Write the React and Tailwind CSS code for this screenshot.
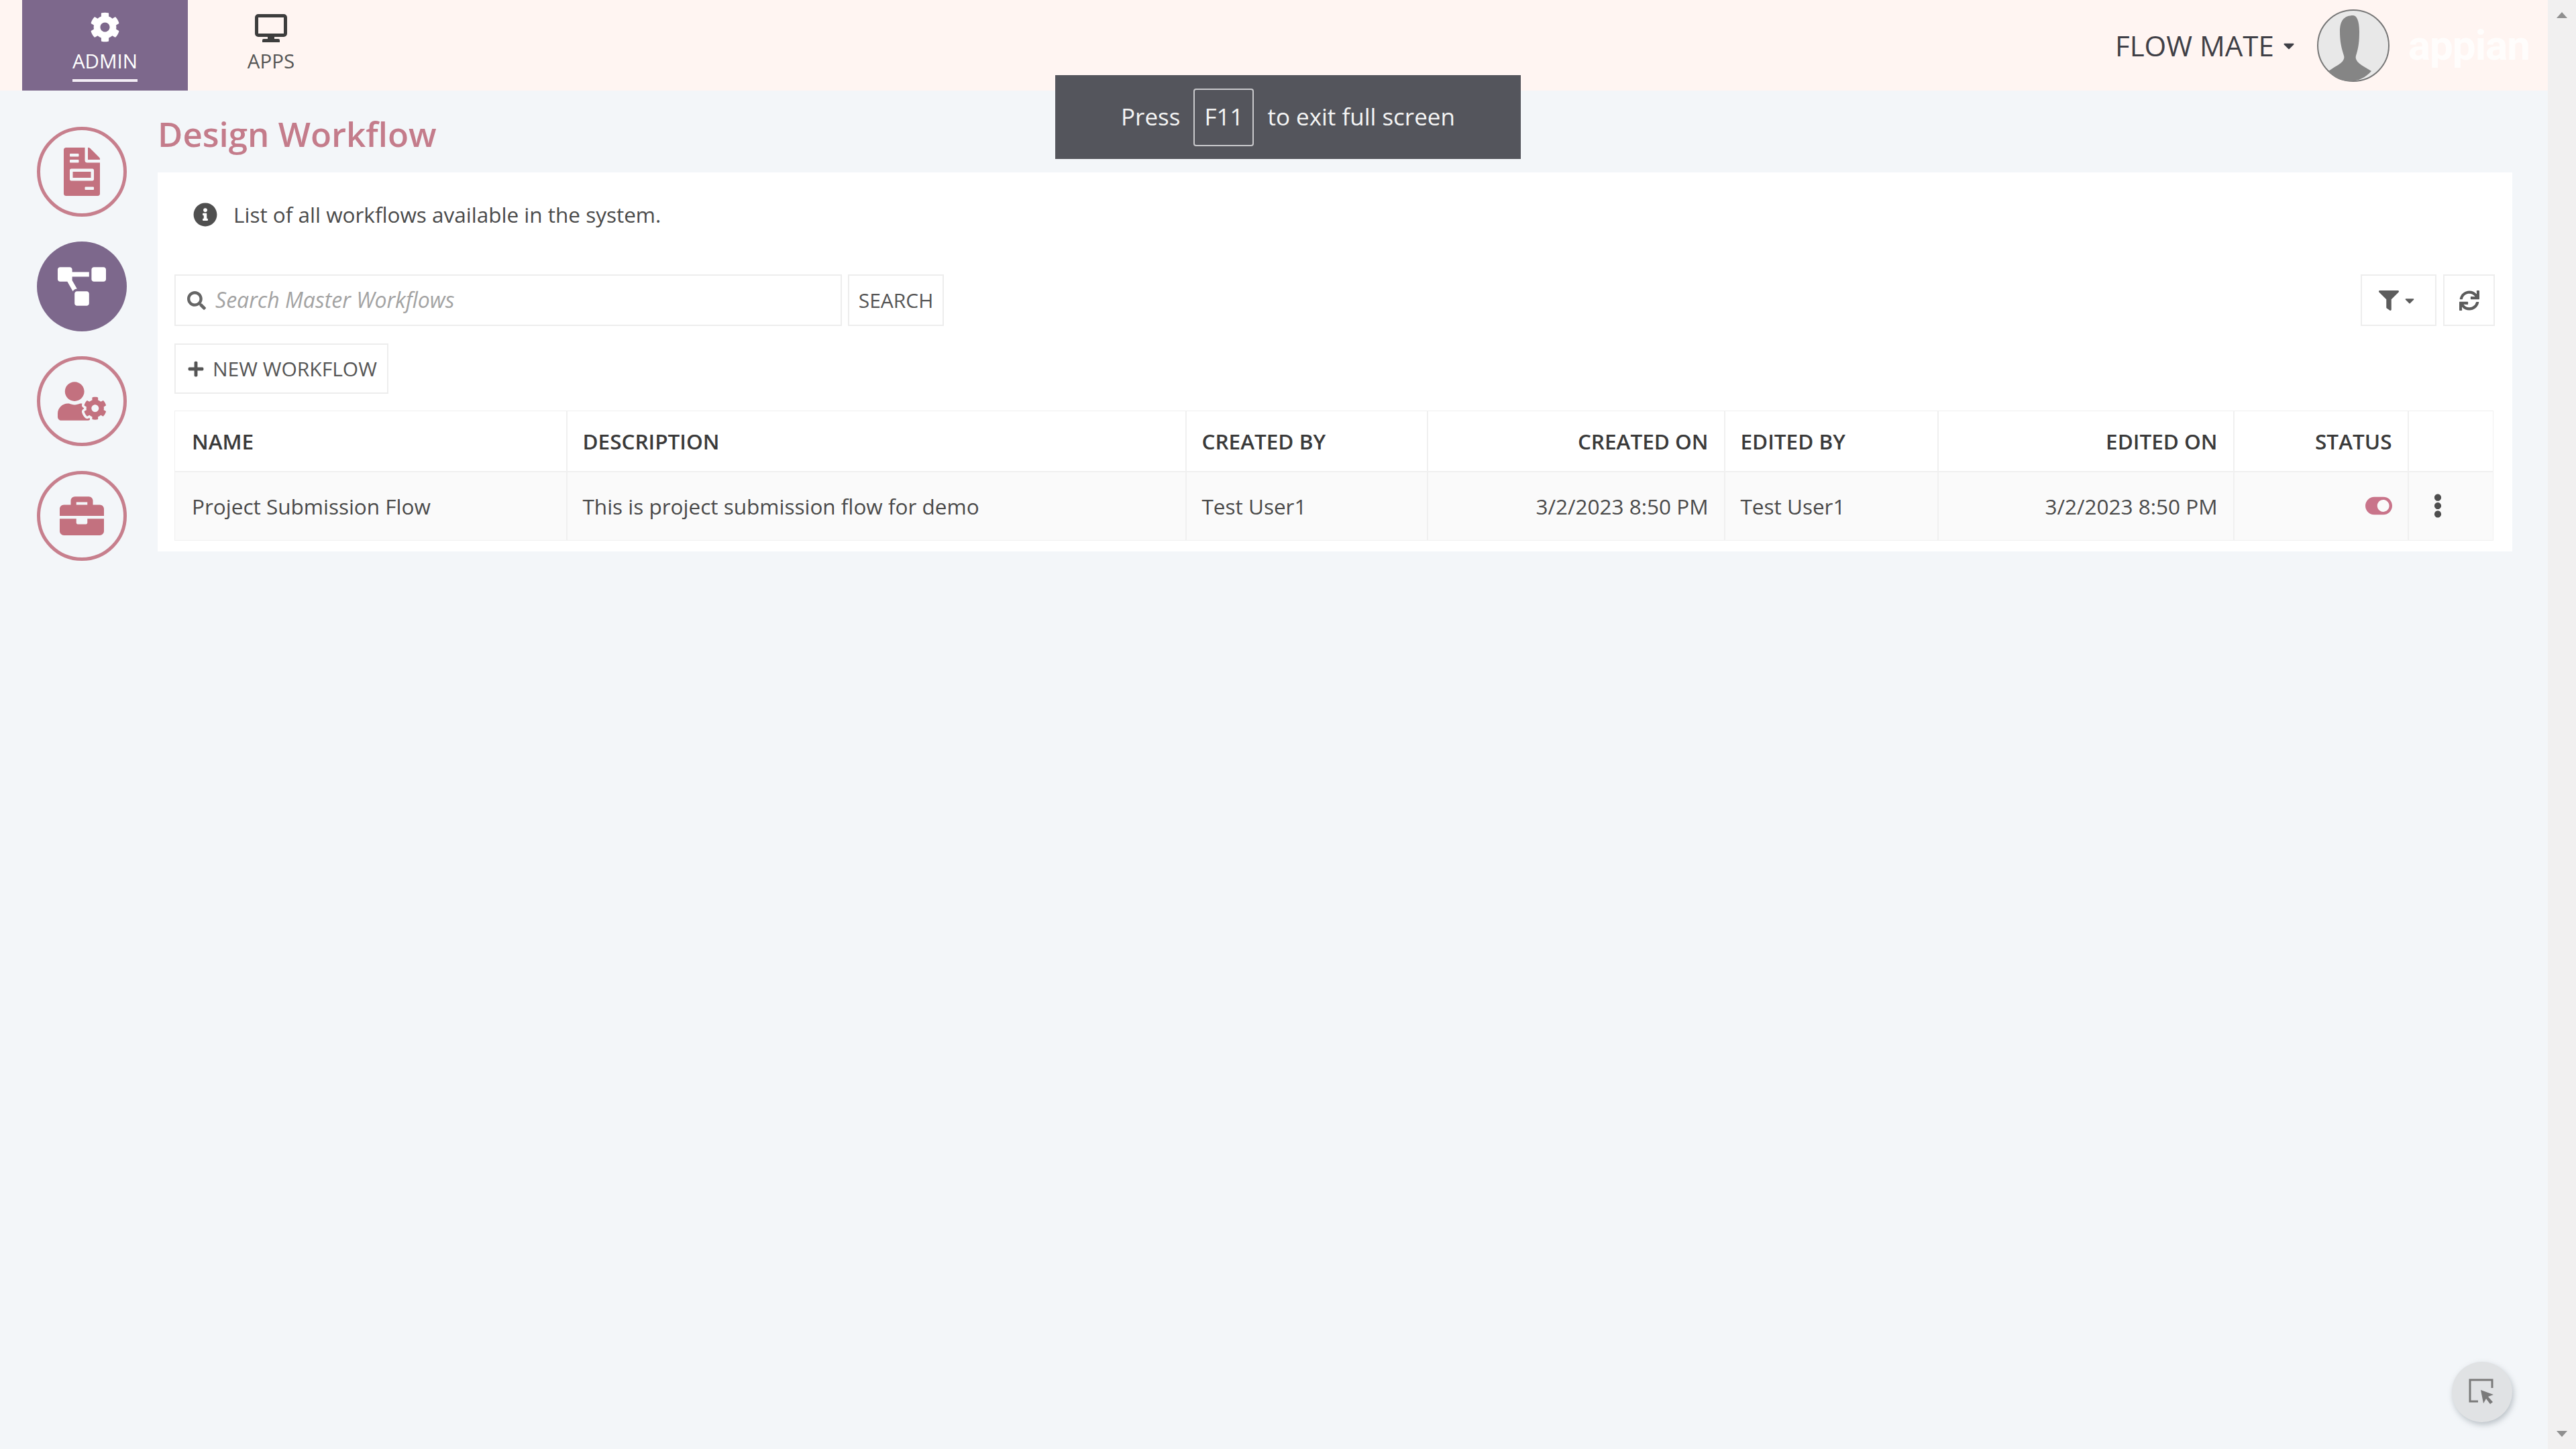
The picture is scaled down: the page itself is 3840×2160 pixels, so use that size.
import React from "react";
import {
  FaBriefcase,
  FaCaretDown,
  FaCog,
  FaEllipsisV,
  FaFileInvoice,
  FaFilter,
  FaInfoCircle,
  FaPlus,
  FaProjectDiagram,
  FaSearch,
  FaSync,
  FaToggleOn,
  FaUserCog,
} from "react-icons/fa";

const columns = [
  { label: "NAME", value: "Project Submission Flow", width: "w-[584px]" },
  { label: "DESCRIPTION", value: "This is project submission flow for demo", width: "w-[923px]" },
  { label: "CREATED BY", value: "Test User1", width: "w-[360px]" },
  { label: "CREATED ON", value: "3/2/2023 8:50 PM", width: "w-[443px]", right: true },
  { label: "EDITED BY", value: "Test User1", width: "w-[318px]" },
  { label: "EDITED ON", value: "3/2/2023 8:50 PM", width: "w-[441px]", right: true },
];

function SideItem({ icon: Icon, active, size }) {
  return (
    <div
      className={
        active
          ? "flex h-[134px] w-[134px] items-center justify-center rounded-full bg-[#7d688c] text-white"
          : "flex h-[134px] w-[134px] items-center justify-center rounded-full border-[5px] border-[#c77f8d] text-[#c3717f]"
      }
    >
      <Icon className={size} />
    </div>
  );
}

export default function App() {
  return (
    <div className="relative flex h-[2160px] w-[3840px] overflow-hidden bg-[#f3f6f9] font-['Open_Sans',sans-serif] text-[31.5px] text-[#4a4a4a]">
      <div className="flex min-w-0 flex-1 flex-col">
        {/* top bar */}
        <header className="flex h-[135px] items-stretch bg-[#fff5f2] pl-[33px] pr-[27px]">
          <div className="flex w-[247px] flex-col items-center bg-[#7d688c] pt-[18px] text-white">
            <FaCog className="h-[45px] w-[45px]" />
            <span className="mt-[8px] border-b-[4px] border-[#f4eef6] pb-[7px] text-[29.5px] leading-[40px]">ADMIN</span>
          </div>
          <div className="flex w-[248px] flex-col items-center pt-[21px] text-[#555]">
            <svg viewBox="0 0 48 42" className="h-[42px] w-[48px] text-[#3d3d3d]" fill="currentColor">
              <path d="M5 0h38a5 5 0 0 1 5 5v24a5 5 0 0 1-5 5H29v3h6a2 2 0 0 1 2 2v3H11v-3a2 2 0 0 1 2-2h6v-3H5a5 5 0 0 1-5-5V5a5 5 0 0 1 5-5zm0 5v24h38V5z" fillRule="evenodd" />
            </svg>
            <span className="mt-[8px] text-[29.5px] leading-[40px]">APPS</span>
          </div>
          <div className="ml-auto flex items-center">
            <span className="text-[42px] font-medium leading-none text-[#3f3f46]">FLOW MATE</span>
            <FaCaretDown className="ml-[12px] h-[26px] w-[20px] text-[#3f3f46]" />
            <svg viewBox="0 0 108 110" className="ml-[32px] h-[110px] w-[108px]">
              <circle cx="54" cy="55" r="53" fill="#e8e8e8" stroke="#777" strokeWidth="2" />
              <path d="M54 10c-14 0-20 8-20 24 0 14 2 24 6 36 2 6-4 12-14 17l-9 6c8 10 19 15 31 15 13 0 24-5 33-15l-10-6c-9-5-15-11-13-17 4-12 5-22 5-36 0-16-4-24-9-24z" fill="#858585" />
            </svg>
            <span className="ml-[28px] font-['Roboto',sans-serif] text-[62px] font-bold leading-none tracking-[-1px] text-[#fffdfc]">appian</span>
          </div>
        </header>

        <div className="flex flex-1">
          {/* left icons */}
          <nav className="flex w-[235px] shrink-0 flex-col gap-[37px] pl-[55px] pt-[54px]">
            <SideItem icon={FaFileInvoice} size="h-[72px] w-[56px]" />
            <SideItem icon={FaProjectDiagram} active size="h-[62px] w-[72px]" />
            <SideItem icon={FaUserCog} size="h-[60px] w-[72px]" />
            <SideItem icon={FaBriefcase} size="h-[66px] w-[72px]" />
          </nav>

          <main className="min-w-0 flex-1 pr-[53px]">
            <h1 className="flex h-[122px] items-center pt-[6px] text-[51px] font-semibold text-[#c47c8b]">Design Workflow</h1>

            <section className="bg-white px-[25px] pb-[16px] pt-[38px]">
              <div className="flex h-[50px] items-center">
                <FaInfoCircle className="ml-[28px] h-[36px] w-[36px] text-[#4f4f4f]" />
                <span className="ml-[24px]">List of all workflows available in the system.</span>
              </div>

              <div className="mt-[64px] flex h-[77px] gap-[9px] pr-[1px]">
                <div className="flex w-[995px] items-center border-2 border-[#ededed] pl-[17px]">
                  <FaSearch className="h-[28px] w-[28px] text-[#666]" />
                  <input
                    className="ml-[14px] min-w-0 flex-1 bg-transparent pb-[2px] text-[32px] outline-none placeholder:italic placeholder:text-[#a3a3a3]"
                    placeholder="Search Master Workflows"
                  />
                </div>
                <button className="w-[143px] border-2 border-[#ededed] text-[30px] font-medium text-[#555]">SEARCH</button>
                <div className="ml-auto flex gap-[10px]">
                  <button className="flex w-[113px] items-center justify-center gap-[8px] border-2 border-[#ededed] pr-[6px] text-[#5c5c5c]">
                    <FaFilter className="h-[30px] w-[30px]" />
                    <FaCaretDown className="h-[22px] w-[16px]" />
                  </button>
                  <button className="flex w-[77px] items-center justify-center border-2 border-[#ededed] text-[#5c5c5c]">
                    <FaSync className="h-[30px] w-[30px]" />
                  </button>
                </div>
              </div>

              <button className="mt-[26px] flex h-[75px] w-[319px] items-center gap-[12px] border-2 border-[#ededed] pl-[17px] text-[30px] font-medium text-[#555]">
                <FaPlus className="h-[26px] w-[26px]" />
                NEW WORKFLOW
              </button>

              <table className="mt-[25px] w-[3456px] table-fixed border-collapse border border-[#f0f0f0]">
                <thead>
                  <tr className="h-[90px] border-b-2 border-[#f0f0f0]">
                    {columns.map((c, i) => (
                      <th
                        key={c.label}
                        className={`${c.width} border-r-2 border-[#f0f0f0] ${i === 0 ? "pl-[25px] pr-[23px]" : "px-[23px]"} font-semibold text-[#3a3a3a] ${c.right ? "text-right" : "text-left"}`}
                      >
                        {c.label}
                      </th>
                    ))}
                    <th className="w-[260px] border-r-2 border-[#f0f0f0] px-[23px] text-right font-semibold text-[#3a3a3a]">STATUS</th>
                    <th className="w-[127px]" />
                  </tr>
                </thead>
                <tbody>
                  <tr className="h-[103px] bg-[#fafafa]">
                    {columns.map((c, i) => (
                      <td
                        key={c.label}
                        className={`border-r-2 border-[#f0f0f0] ${i === 0 ? "pl-[25px] pr-[23px]" : "px-[23px]"} ${c.right ? "text-right" : "text-left"}`}
                      >
                        {c.value}
                      </td>
                    ))}
                    <td className="border-r-2 border-[#f0f0f0] px-[23px]">
                      <FaToggleOn className="ml-auto h-[38px] w-[40px] text-[#c9748a]" />
                    </td>
                    <td className="pl-[25px]">
                      <FaEllipsisV className="h-[36px] w-[36px] text-[#4f4f4f]" />
                    </td>
                  </tr>
                </tbody>
              </table>
            </section>
          </main>
        </div>
      </div>

      {/* scrollbar */}
      <div className="flex w-[42px] shrink-0 flex-col items-center justify-between bg-[#f1f0f0] py-[18px] text-[#8a8a8a]">
        <div className="h-0 w-0 border-x-[8px] border-b-[9px] border-x-transparent border-b-[#8f8f8f]" />
        <div className="h-0 w-0 border-x-[8px] border-t-[9px] border-x-transparent border-t-[#8f8f8f]" />
      </div>

      {/* fullscreen toast */}
      <div className="absolute left-[1573px] top-[112px] flex h-[125px] w-[694px] items-center justify-center bg-[#54555c] text-[35px] text-[#f5f5f5]">
        <span>Press</span>
        <span className="mx-[20px] flex h-[86px] w-[90px] items-center justify-center rounded-[4px] border-2 border-[#c9c9cc]">F11</span>
        <span>to exit full screen</span>
      </div>

      {/* floating button */}
      <button className="absolute left-[3655px] top-[2030px] flex h-[90px] w-[90px] items-center justify-center rounded-full bg-[#e0e2e4] shadow-[2px_4px_8px_rgba(120,130,140,0.45)]">
        <svg viewBox="0 0 40 40" className="h-[40px] w-[40px] text-[#7a7a7a]" fill="none" stroke="currentColor" strokeWidth="3">
          <path d="M14 34H2V2h33v12" />
          <path d="M18 17l19 7-8 3 7 8-4 3-6-8-4 7z" fill="currentColor" stroke="none" />
        </svg>
      </button>
    </div>
  );
}
